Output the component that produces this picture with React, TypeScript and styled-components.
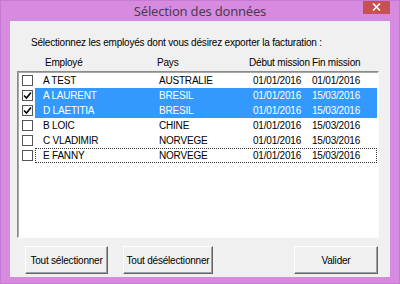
import React from "react";
import styled, { createGlobalStyle } from "styled-components";

const GlobalStyle = createGlobalStyle`
  html, body {
    margin: 0;
    padding: 0;
    background: #d68be0;
  }
  body {
    font-family: "Liberation Sans", Arial, sans-serif;
  }
`;

const Window = styled.div`
  width: 400px;
  height: 284px;
  box-sizing: border-box;
  background: #d68be0;
  border: 1px solid #c77ad3;
  display: flex;
  flex-direction: column;
  overflow: hidden;
`;

const TitleBar = styled.div`
  position: relative;
  height: 20px;
  flex: none;
  display: flex;
  align-items: center;
  justify-content: center;
`;

const Title = styled.div`
  font-family: "Noto Sans", "Open Sans", sans-serif;
  font-size: 13px;
  letter-spacing: -0.2px;
  color: #4a3d50;
  margin-top: -1px;
`;

const CloseButton = styled.div`
  position: absolute;
  top: -1px;
  right: 9px;
  width: 27px;
  height: 14px;
  background: #c75050;
  display: flex;
  align-items: center;
  justify-content: center;
`;

const Body = styled.div`
  flex: 1;
  margin: 0 9px 6px 9px;
  background: #f0f0f0;
  display: flex;
  flex-direction: column;
  font-size: 10px;
  letter-spacing: -0.2px;
  color: #000;
`;

const Prompt = styled.div`
  margin: 16px 0 0 21px;
  line-height: 12px;
  white-space: nowrap;
`;

const HeaderRow = styled.div`
  display: grid;
  grid-template-columns: 112px 92px 63px 1fr;
  padding-left: 35px;
  margin-top: 8px;
  line-height: 12px;
  white-space: nowrap;
`;

const ListBox = styled.div`
  margin: 2px 0 0 7px;
  width: 362px;
  height: 167px;
  flex: none;
  box-sizing: border-box;
  background: #fff;
  border: 1px solid;
  border-color: #8a8a8a #fdfdfd #fdfdfd #8a8a8a;
  box-shadow: inset 1px 1px 0 #a8a8a8;
  padding-top: 1px;
`;

const Row = styled.div`
  display: flex;
  height: 15px;
  align-items: center;
`;

const CheckCell = styled.div`
  width: 17px;
  flex: none;
  display: flex;
  align-items: center;
  padding-left: 4px;
  box-sizing: border-box;
`;

const Box = styled.div`
  width: 11px;
  height: 11px;
  box-sizing: border-box;
  border: 1px solid #555;
  background: #fff;
  display: flex;
  align-items: center;
  justify-content: center;
`;

const Item = styled.div<{ $selected?: boolean; $focused?: boolean }>`
  flex: 1;
  height: 15px;
  box-sizing: border-box;
  display: grid;
  grid-template-columns: 116px 94px 59px 1fr;
  align-items: center;
  white-space: nowrap;
  margin-right: 1px;
  background: ${(p) => (p.$selected ? "#3399ff" : "transparent")};
  color: ${(p) => (p.$selected ? "#fff" : "#000")};
  border: 1px ${(p) => (p.$focused ? "dotted #333" : "solid transparent")};
  border-left-width: ${(p) => (p.$focused ? "1px" : "0")};
  padding-left: ${(p) => (p.$focused ? "7px" : "8px")};
`;

const ButtonRow = styled.div`
  display: flex;
  align-items: center;
  margin-top: 8px;
  padding-left: 15px;
  padding-right: 12px;
`;

const Button = styled.button<{ $width: number; $push?: boolean }>`
  width: ${(p) => p.$width}px;
  height: 28px;
  margin-right: 15px;
  margin-left: ${(p) => (p.$push ? "auto" : "0")};
  font-family: "Liberation Sans", Arial, sans-serif;
  font-size: 10px;
  letter-spacing: -0.2px;
  white-space: nowrap;
  color: #000;
  background: #f0f0f0;
  border: 1px solid;
  border-color: #ffffff #646464 #646464 #ffffff;
  box-shadow: inset -1px -1px 0 #a0a0a0;
  padding: 0;
  &:last-child {
    margin-right: 0;
  }
`;

type Employee = {
  name: string;
  pays: string;
  debut: string;
  fin: string;
  checked?: boolean;
  selected?: boolean;
  focused?: boolean;
};

const employees: Employee[] = [
  { name: "A TEST", pays: "AUSTRALIE", debut: "01/01/2016", fin: "01/01/2016" },
  { name: "A LAURENT", pays: "BRESIL", debut: "01/01/2016", fin: "15/03/2016", checked: true, selected: true },
  { name: "D LAETITIA", pays: "BRESIL", debut: "01/01/2016", fin: "15/03/2016", checked: true, selected: true },
  { name: "B LOIC", pays: "CHINE", debut: "01/01/2016", fin: "15/03/2016" },
  { name: "C VLADIMIR", pays: "NORVEGE", debut: "01/01/2016", fin: "15/03/2016" },
  { name: "E FANNY", pays: "NORVEGE", debut: "01/01/2016", fin: "15/03/2016", focused: true },
];

const Check = () => (
  <svg width="9" height="9" viewBox="0 0 9 9">
    <path d="M1 4.5 L3.5 7 L8 1.5" fill="none" stroke="#000" strokeWidth="1.6" />
  </svg>
);

export default function App() {
  return (
    <>
      <GlobalStyle />
      <Window>
        <TitleBar>
          <Title>Sélection des données</Title>
          <CloseButton>
            <svg width="9" height="8" viewBox="0 0 9 8">
              <path d="M1 0.5 L8 7.5 M8 0.5 L1 7.5" stroke="#fff" strokeWidth="1.6" />
            </svg>
          </CloseButton>
        </TitleBar>
        <Body>
          <Prompt>Sélectionnez les employés dont vous désirez exporter la facturation :</Prompt>
          <HeaderRow>
            <span>Employé</span>
            <span>Pays</span>
            <span>Début mission</span>
            <span>Fin mission</span>
          </HeaderRow>
          <ListBox>
            {employees.map((e) => (
              <Row key={e.name}>
                <CheckCell>
                  <Box>{e.checked && <Check />}</Box>
                </CheckCell>
                <Item $selected={e.selected} $focused={e.focused}>
                  <span>{e.name}</span>
                  <span>{e.pays}</span>
                  <span>{e.debut}</span>
                  <span>{e.fin}</span>
                </Item>
              </Row>
            ))}
          </ListBox>
          <ButtonRow>
            <Button $width={83}>Tout sélectionner</Button>
            <Button $width={90}>Tout désélectionner</Button>
            <Button $width={84} $push>Valider</Button>
          </ButtonRow>
        </Body>
      </Window>
    </>
  );
}
